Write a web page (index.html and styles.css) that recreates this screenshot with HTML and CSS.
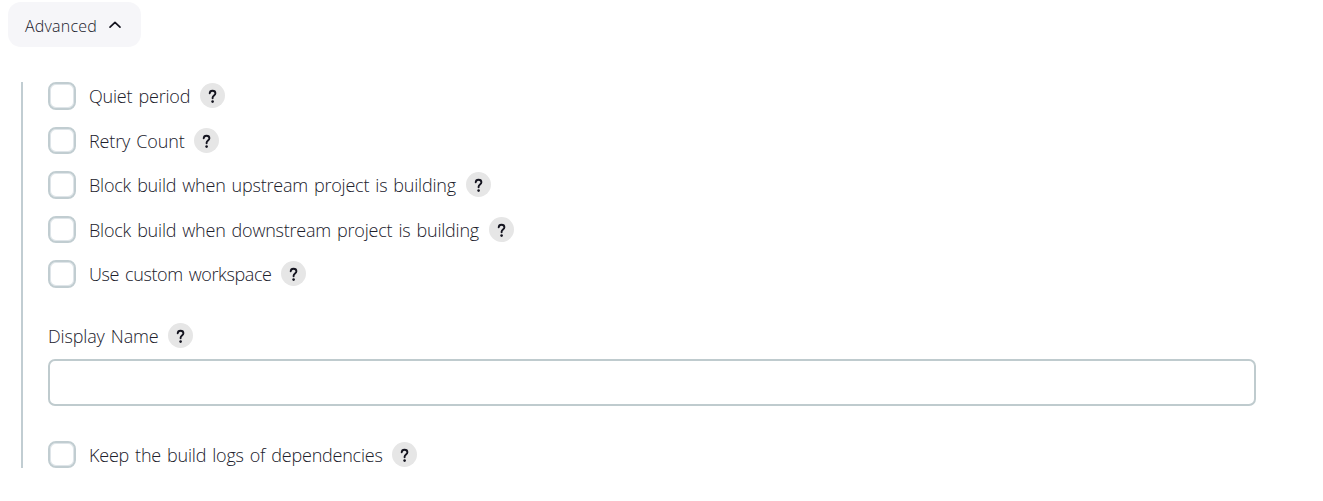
FILE: index.html
```html
<!DOCTYPE html>
<html lang="en">
<head>
<meta charset="utf-8">
<title>Advanced</title>
<link rel="stylesheet" href="styles.css">
</head>
<body>
<svg class="defs" aria-hidden="true">
  <symbol id="question" viewBox="0 0 25 25">
    <path d="M9.7 10.3C9.8 8.7 10.9 7.8 12.5 7.8c1.7 0 2.9 1 2.9 2.5 0 2.2-2.8 2.3-2.8 4.5v.5" fill="none" stroke="#14141f" stroke-width="1.9" stroke-linecap="round" stroke-linejoin="round"/>
    <circle cx="12.6" cy="18.6" r="1.3" fill="#14141f"/>
  </symbol>
</svg>
<button class="advanced" type="button">Advanced
  <svg class="chevron" viewBox="0 0 14 10"><path d="M2 7.2 7 2.4l5 4.8" fill="none" stroke="#14141f" stroke-width="1.7" stroke-linecap="round" stroke-linejoin="round"/></svg>
</button>
<main class="section">
  <div class="options">
    <div class="row"><label class="option"><input class="check" type="checkbox"><span class="label quiet">Quiet period</span></label><a class="help"><svg><use href="#question"/></svg></a></div>
    <div class="row"><label class="option"><input class="check" type="checkbox"><span class="label retry">Retry Count</span></label><a class="help"><svg><use href="#question"/></svg></a></div>
    <div class="row"><label class="option"><input class="check" type="checkbox"><span class="label upstream">Block build when upstream project is building</span></label><a class="help"><svg><use href="#question"/></svg></a></div>
    <div class="row"><label class="option"><input class="check" type="checkbox"><span class="label downstream">Block build when downstream project is building</span></label><a class="help"><svg><use href="#question"/></svg></a></div>
    <div class="row"><label class="option"><input class="check" type="checkbox"><span class="label workspace">Use custom workspace</span></label><a class="help"><svg><use href="#question"/></svg></a></div>
  </div>
  <div class="row title"><label class="label display" for="name">Display Name</label><a class="help"><svg><use href="#question"/></svg></a></div>
  <input class="field" id="name" type="text">
  <div class="row"><label class="option"><input class="check" type="checkbox"><span class="label logs">Keep the build logs of dependencies</span></label><a class="help"><svg><use href="#question"/></svg></a></div>
</main>
</body>
</html>
```
FILE: styles.css
```css
* { box-sizing: border-box; }
body { margin: 0; padding: 2px 8px 0; background: #fff; color: #20202b; font-family: "Open Sans", "Noto Sans", sans-serif; font-weight: 300; }
.defs { display: none; }
.advanced { display: flex; align-items: center; gap: 11px; width: 133px; height: 45px; padding: 3px 0 0 17px; border: 0; border-radius: 13px; background: #f6f6f9; color: #20202b; font: inherit; font-size: 16px; letter-spacing: 0.2px; }
.chevron { width: 14px; height: 10px; margin-top: -2px; }
.section { width: 1248px; height: 386px; margin: 35px 0 0 13px; padding-left: 25px; border-left: 2px solid #c1cdd2; }
.options { display: grid; gap: 17px; }
.row { display: flex; align-items: center; gap: 10px; height: 27.5px; }
.option { display: flex; align-items: center; gap: 13px; }
.check { appearance: none; width: 28px; height: 27.5px; margin: 0; border: 2.5px solid #c1cdd1; border-radius: 8px; background: #fff; box-shadow: inset 0 0 0 1px #dfe5e9; }
.label { padding-top: 1px; font-size: 18px; line-height: 26px; letter-spacing: -0.22px; word-spacing: 1.6px; white-space: nowrap; }
.quiet { width: 101px; letter-spacing: -0.2px; }
.retry { width: 95px; letter-spacing: -0.15px; }
.upstream { width: 367px; }
.downstream { width: 390px; }
.workspace { width: 182px; letter-spacing: -0.38px; }
.display { width: 110px; letter-spacing: -0.15px; }
.logs { width: 293px; }
.help { width: 25px; height: 25px; border-radius: 50%; background: #e6e6e6; }
.help svg { display: block; width: 25px; height: 25px; }
.title { margin-top: 34px; }
.field { display: block; width: 1208px; height: 47px; margin: 10px 0 34.5px; padding: 0 12px; border: 2px solid #bfcbce; border-radius: 7px; background: #fff; font: inherit; }
```
